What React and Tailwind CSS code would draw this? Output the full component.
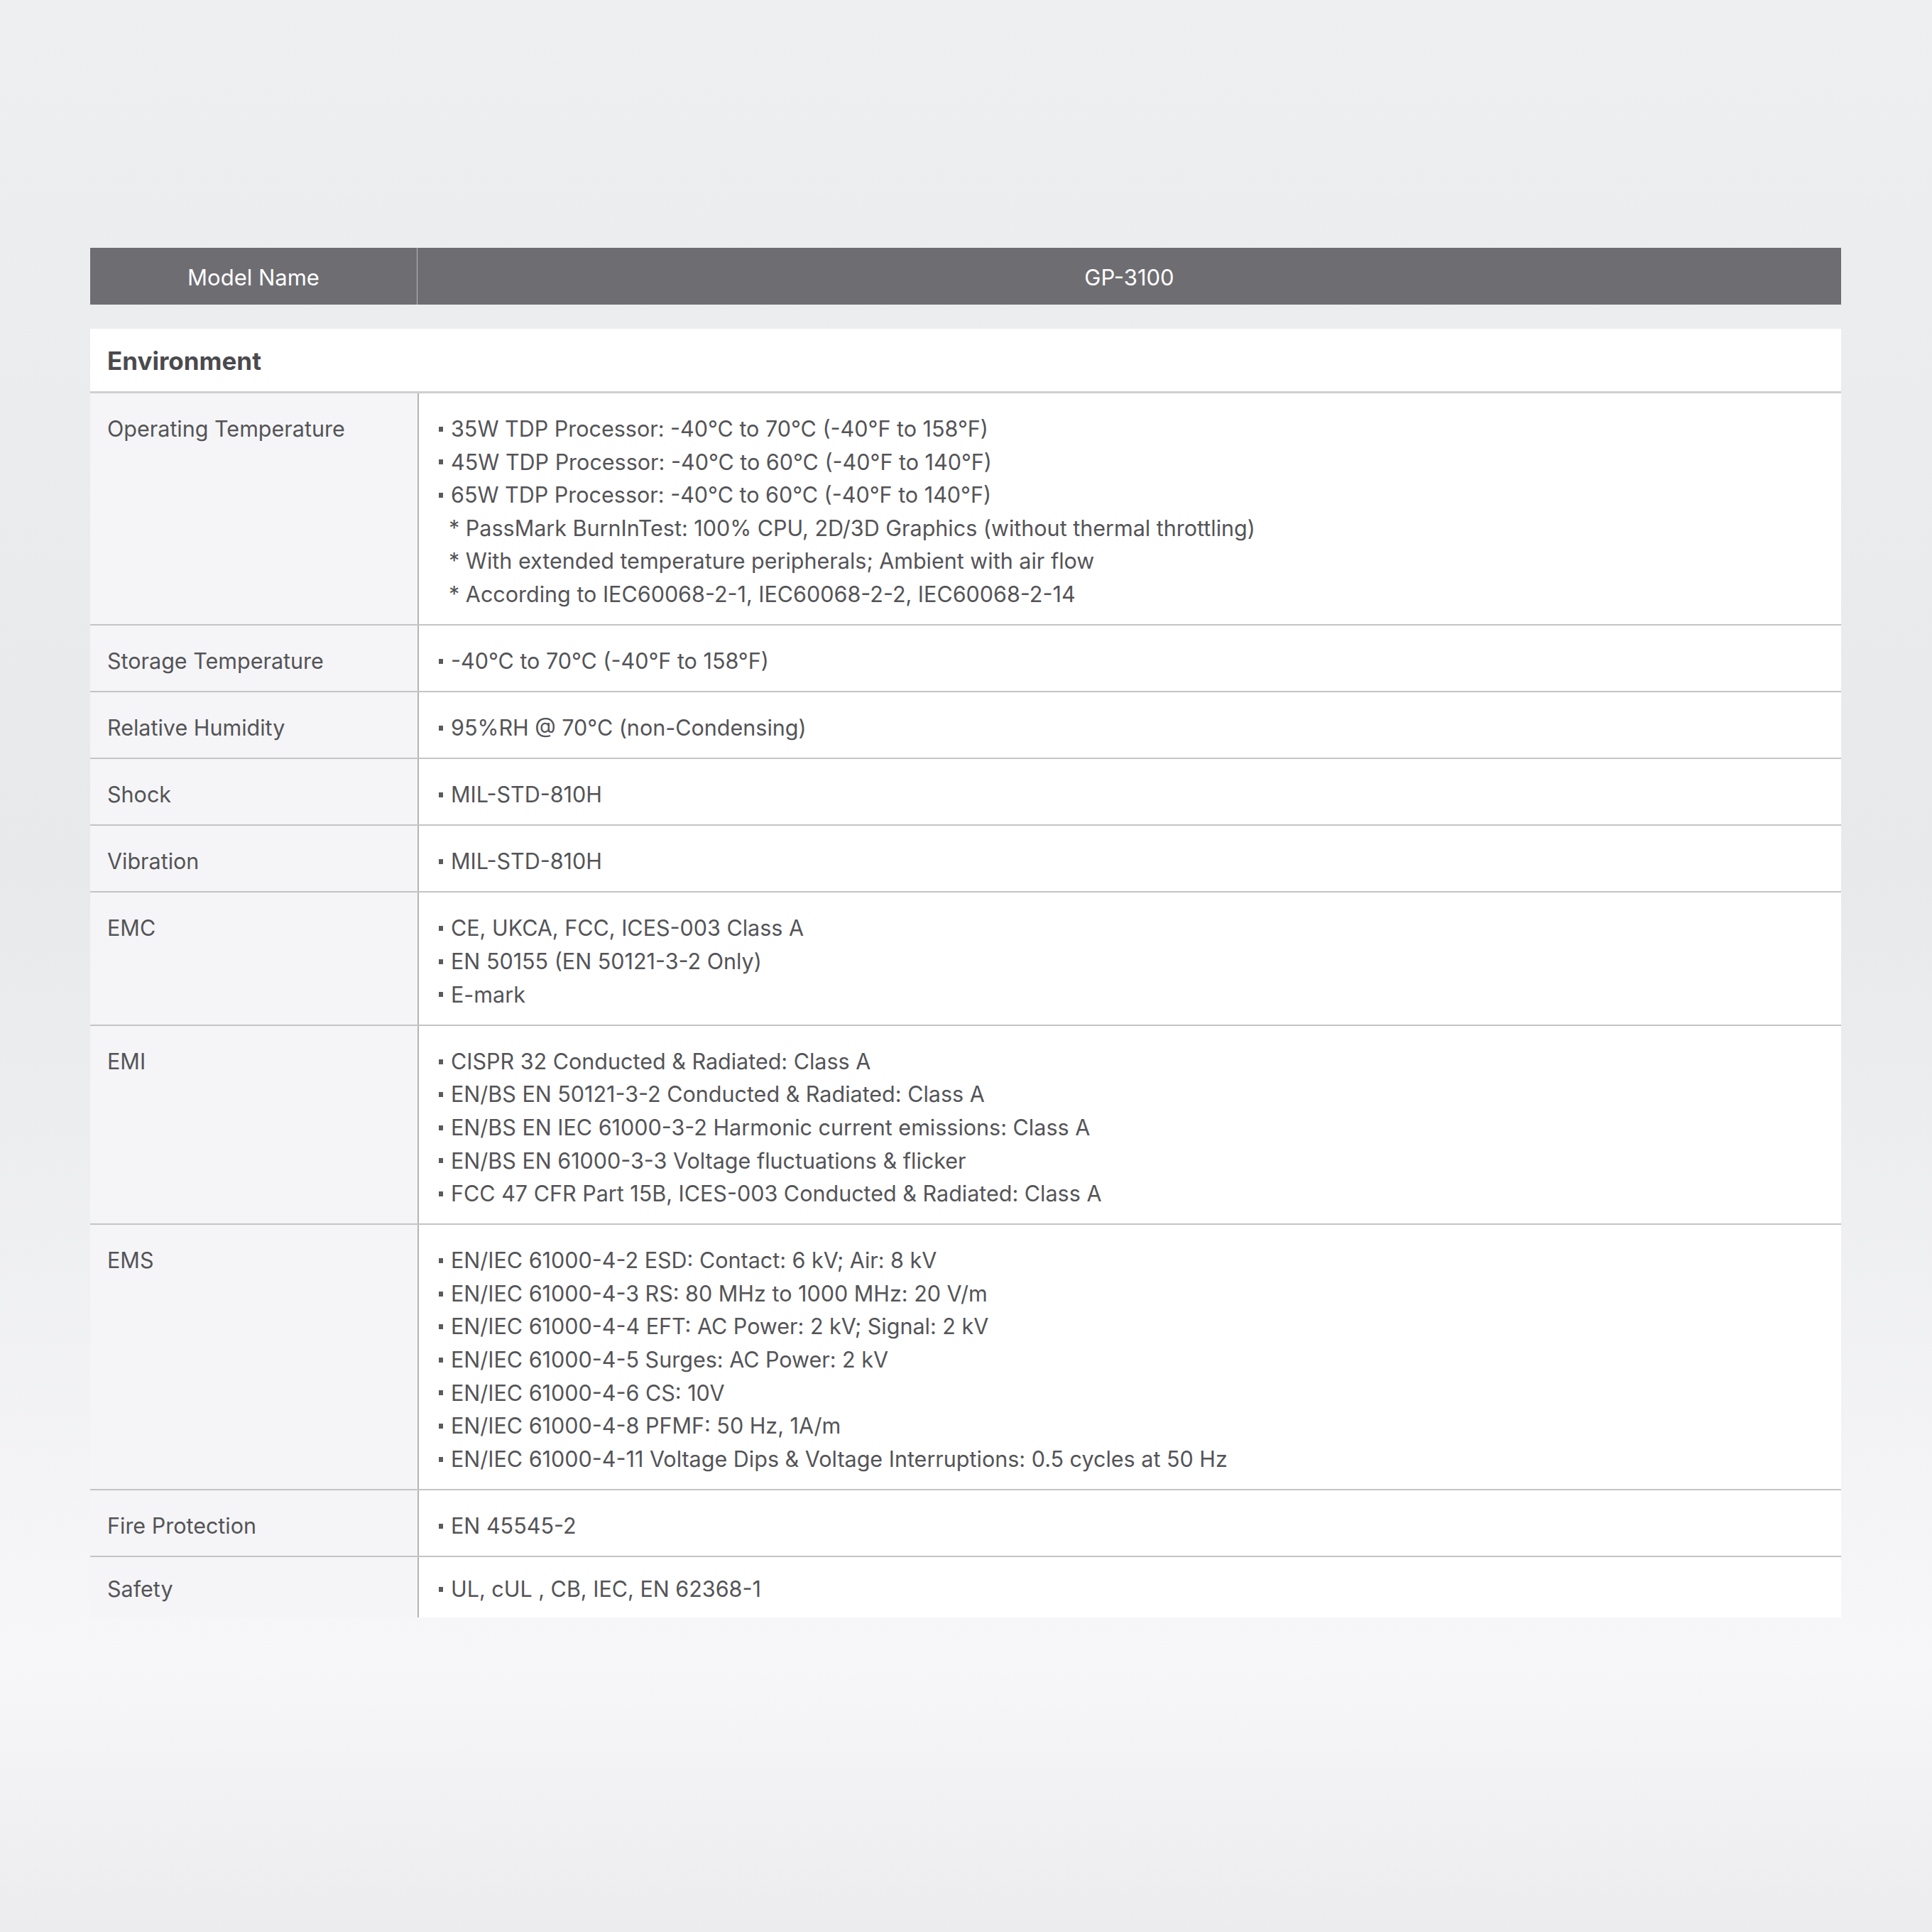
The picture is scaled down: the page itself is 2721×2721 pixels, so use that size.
import React from 'react';

const rows = [
  {
    label: 'Operating Temperature',
    items: [
      '35W TDP Processor: -40°C to 70°C (-40°F to 158°F)',
      '45W TDP Processor: -40°C to 60°C (-40°F to 140°F)',
      '65W TDP Processor: -40°C to 60°C (-40°F to 140°F)',
    ],
    notes: [
      '* PassMark BurnInTest: 100% CPU, 2D/3D Graphics (without thermal throttling)',
      '* With extended temperature peripherals; Ambient with air flow',
      '* According to IEC60068-2-1, IEC60068-2-2, IEC60068-2-14',
    ],
  },
  { label: 'Storage Temperature', items: ['-40°C to 70°C (-40°F to 158°F)'] },
  { label: 'Relative Humidity', items: ['95%RH @ 70°C (non-Condensing)'] },
  { label: 'Shock', items: ['MIL-STD-810H'] },
  { label: 'Vibration', items: ['MIL-STD-810H'] },
  {
    label: 'EMC',
    items: ['CE, UKCA, FCC, ICES-003 Class A', 'EN 50155 (EN 50121-3-2 Only)', 'E-mark'],
  },
  {
    label: 'EMI',
    items: [
      'CISPR 32 Conducted & Radiated: Class A',
      'EN/BS EN 50121-3-2 Conducted & Radiated: Class A',
      'EN/BS EN IEC 61000-3-2 Harmonic current emissions: Class A',
      'EN/BS EN 61000-3-3 Voltage fluctuations & flicker',
      'FCC 47 CFR Part 15B, ICES-003 Conducted & Radiated: Class A',
    ],
  },
  {
    label: 'EMS',
    items: [
      'EN/IEC 61000-4-2 ESD: Contact: 6 kV; Air: 8 kV',
      'EN/IEC 61000-4-3 RS: 80 MHz to 1000 MHz: 20 V/m',
      'EN/IEC 61000-4-4 EFT: AC Power: 2 kV; Signal: 2 kV',
      'EN/IEC 61000-4-5 Surges: AC Power: 2 kV',
      'EN/IEC 61000-4-6 CS: 10V',
      'EN/IEC 61000-4-8 PFMF: 50 Hz, 1A/m',
      'EN/IEC 61000-4-11 Voltage Dips & Voltage Interruptions: 0.5 cycles at 50 Hz',
    ],
  },
  { label: 'Fire Protection', items: ['EN 45545-2'] },
  { label: 'Safety', items: ['UL, cUL , CB, IEC, EN 62368-1'] },
];

function SpecRow({ row, last }) {
  const pad = last ? 'pt-[22px] pb-[16px]' : 'pt-[27px] pb-[18.5px]';
  return (
    <div
      className={
        'grid grid-cols-[461px_1fr] ' +
        (last ? '' : 'border-b-2 border-[#c4c4c6]')
      }
    >
      <div className={'bg-[#f5f5f7] pl-[24px] ' + pad}>{row.label}</div>
      <div className={'bg-white border-l-2 border-[#b4b4b6] pl-[28px] ' + pad}>
        {row.items.map((item) => (
          <div key={item} className="flex items-center">
            <span className="w-[6px] h-[7px] bg-[#5a5a5d] mr-[11px] shrink-0" />
            <span>{item}</span>
          </div>
        ))}
        {row.notes &&
          row.notes.map((note) => (
            <div key={note} className="pl-[14px]">
              {note}
            </div>
          ))}
      </div>
    </div>
  );
}

export default function App() {
  return (
    <div className="w-[2721px] h-[2721px] bg-[linear-gradient(180deg,#eeeff1_0%,#e8e9eb_45%,#f7f7f9_86%,#ececee_100%)] pt-[349px] pl-[127px] font-['Inter',sans-serif]">
      <div className="w-[2466px]">
        <div className="h-[80px] bg-[#6e6d72] flex text-white text-[31px] pt-[4px]">
          <div className="w-[461px] flex items-center justify-center border-r border-[#b9b9bc] -mt-[4px] pt-[4px]">
            Model Name
          </div>
          <div className="flex-1 flex items-center justify-center">GP-3100</div>
        </div>

        <div className="mt-[34px] bg-white h-[91px] flex items-center pl-[24px] pt-[2px] border-b-[3px] border-[#cfcfd1]">
          <span className="text-[35px] font-bold text-[#4a4a4d]">Environment</span>
        </div>

        <div className="text-[30.5px] leading-[46.6px] text-[#545457]">
          {rows.map((row, i) => (
            <SpecRow key={row.label} row={row} last={i === rows.length - 1} />
          ))}
        </div>
      </div>
    </div>
  );
}
